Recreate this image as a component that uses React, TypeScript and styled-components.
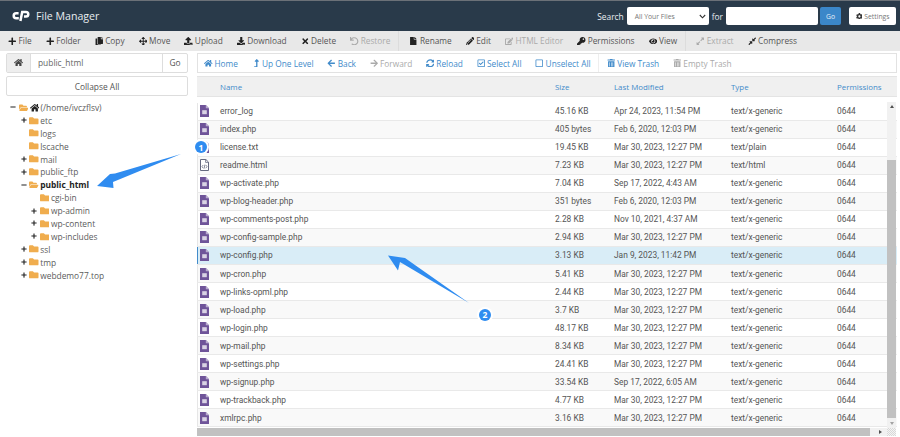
import React from 'react'
import styled, { createGlobalStyle } from 'styled-components'
import {
  FaArrowLeft,
  FaArrowRight,
  FaArrowsAlt,
  FaCog,
  FaCompressAlt,
  FaCopy,
  FaDownload,
  FaEdit,
  FaExpandAlt,
  FaEye,
  FaFile,
  FaFolder,
  FaFolderOpen,
  FaHome,
  FaKey,
  FaLevelUpAlt,
  FaMinus,
  FaPencilAlt,
  FaPlus,
  FaRegCheckSquare,
  FaRegSquare,
  FaSyncAlt,
  FaTimes,
  FaTrashAlt,
  FaUndo,
  FaUpload,
} from 'react-icons/fa'

const GlobalStyle = createGlobalStyle`
  html, body {
    margin: 0;
    padding: 0;
    background: #fff;
    overflow: hidden;
  }
  * {
    box-sizing: border-box;
  }
`

const Page = styled.div`
  position: relative;
  width: 900px;
  height: 437px;
  overflow: hidden;
  display: flex;
  flex-direction: column;
  font-family: 'Open Sans', 'Liberation Sans', sans-serif;
  color: #555;
  background: #fff;
`

const Header = styled.header`
  height: 31px;
  flex: none;
  background: #293a4a;
  border-top: 1px solid #6b7178;
  display: flex;
  align-items: center;
  padding: 0 4px 0 12px;
`

const Brand = styled.div`
  display: flex;
  align-items: center;
  gap: 6px;
  color: #e8edf0;
  font-size: 10.6px;
`

const SearchArea = styled.div`
  margin-left: auto;
  display: flex;
  align-items: center;
  color: #e8edf0;
  font-size: 8.4px;
`

const ScopeSelect = styled.div`
  width: 82px;
  height: 17.5px;
  margin: 0 3px;
  padding: 0 3px 0 8px;
  background: #fff;
  border-radius: 2px;
  color: #777;
  font-size: 6.8px;
  display: flex;
  align-items: center;
  justify-content: space-between;
`

const SearchInput = styled.div`
  width: 92px;
  height: 17.5px;
  margin: 0 2px 0 3px;
  background: #fff;
  border-radius: 2px;
`

const SearchGo = styled.div`
  width: 21px;
  height: 17.5px;
  background: #3b87c9;
  color: #e6f0f8;
  font-size: 6.8px;
  border-radius: 2px;
  display: flex;
  align-items: center;
  justify-content: center;
`

const SettingsButton = styled.div`
  width: 47px;
  height: 17.5px;
  margin-left: 8px;
  background: #fff;
  color: #777;
  font-size: 6.8px;
  border-radius: 2px;
  display: flex;
  align-items: center;
  justify-content: center;
  gap: 2px;

  svg {
    color: #333;
  }
`

const Toolbar = styled.nav`
  height: 19.5px;
  flex: none;
  background: #e8e8e8;
  display: flex;
  align-items: center;
  gap: 14px;
  padding: 0 0 0 8px;
`

const ToolButton = styled.div<{ $disabled?: boolean }>`
  display: flex;
  align-items: center;
  gap: 2px;
  font-size: 8.3px;
  white-space: nowrap;
  color: ${({ $disabled }) => ($disabled ? '#aaa' : '#555')};

  svg {
    font-size: 8.5px;
    color: ${({ $disabled }) => ($disabled ? '#aaa' : '#222')};
  }
`

const ToolSeparator = styled.div`
  width: 1px;
  height: 19.5px;
  background: #dcdcdc;
  margin: 0 -4px 0 -6px;
`

const Body = styled.div`
  flex: 1;
  min-height: 0;
  display: flex;
`

const Sidebar = styled.aside`
  width: 197px;
  flex: none;
  padding: 2.5px 9px 0 6px;
`

const PathBar = styled.div`
  height: 19.5px;
  display: flex;
  align-items: stretch;
  border: 1px solid #ddd;
  border-radius: 2px;
  font-size: 8.4px;
`

const PathHome = styled.div`
  width: 24px;
  background: #eee;
  border-right: 1px solid #ddd;
  display: flex;
  align-items: center;
  justify-content: center;
  color: #444;
  font-size: 9px;
`

const PathValue = styled.div`
  flex: 1;
  padding-left: 7px;
  display: flex;
  align-items: center;
  color: #666;
`

const PathGo = styled.div`
  width: 25px;
  border-left: 1px solid #ddd;
  display: flex;
  align-items: center;
  justify-content: center;
`

const CollapseButton = styled.div`
  height: 20px;
  margin-top: 3.5px;
  border: 1px solid #ddd;
  border-radius: 2px;
  display: flex;
  align-items: center;
  justify-content: center;
  font-size: 8.4px;
`

const Tree = styled.ul`
  list-style: none;
  margin: 5px 0 0;
  padding: 0;
`

const TreeRow = styled.li<{ $depth: number }>`
  height: 12.9px;
  padding-left: ${({ $depth }) => 4 + $depth * 10.7}px;
  display: flex;
  align-items: center;
  font-size: 8.4px;
  color: #5c5c5c;
`

const Toggle = styled.span`
  width: 8.5px;
  flex: none;
  display: flex;
  font-size: 6px;
  color: #222;
`

const TreeGlyph = styled.span<{ $dark?: boolean }>`
  display: flex;
  margin-right: 1.5px;
  font-size: 9.5px;
  color: ${({ $dark }) => ($dark ? '#222' : '#f0ad4e')};
`

const TreeLabel = styled.span<{ $active?: boolean }>`
  font-weight: ${({ $active }) => ($active ? 700 : 400)};
  color: ${({ $active }) => ($active ? '#222' : '#5c5c5c')};
`

const Main = styled.main`
  flex: 1;
  min-width: 0;
  padding: 2.5px 3px 0 0;
  display: flex;
  flex-direction: column;
`

const Actions = styled.div`
  height: 20px;
  flex: none;
  border: 1px solid #e2e2e2;
  display: flex;
  align-items: center;
  gap: 13.6px;
  padding-left: 6px;
`

const ActionLink = styled.div<{ $disabled?: boolean }>`
  display: flex;
  align-items: center;
  gap: 2px;
  font-size: 8.3px;
  white-space: nowrap;
  color: ${({ $disabled }) => ($disabled ? '#aaa' : '#428bca')};

  svg {
    font-size: 8.5px;
  }
`

const ActionSeparator = styled.div`
  width: 1px;
  height: 18px;
  background: #eee;
  margin: 0 -6px;
`

const Table = styled.div`
  position: relative;
  flex: 1;
  min-height: 0;
  margin-top: 3px;
  overflow: hidden;
`

const columns = '23px 335px 59px 117px 106px 1fr'

const HeadRow = styled.div`
  height: 21px;
  display: grid;
  grid-template-columns: ${columns};
  align-items: center;
  background: #f0f0f0;
  border: 1px solid #e4e4e4;
  border-width: 1px 0;
  font-size: 7.9px;
  color: #428bca;
`

const HeadFirst = styled.span`
  grid-column: 2;
`

const RowList = styled.div`
  padding-top: 5.6px;
`

const Row = styled.div<{ $selected: boolean; $odd: boolean }>`
  height: 18.06px;
  display: grid;
  grid-template-columns: ${columns};
  align-items: center;
  font-family: 'Roboto', 'Liberation Sans', sans-serif;
  font-size: 8.4px;
  color: #555;
  background: ${({ $selected, $odd }) => ($selected ? '#d9edf7' : $odd ? '#f9f9f9' : '#fff')};
  border-bottom: 1px solid #e9e9e9;
  box-shadow: inset 1px 0 0 ${({ $selected }) => ($selected ? '#428bca' : '#e6e6e6')};
`

const IconCell = styled.span`
  display: flex;
  padding-left: 3px;
`

const ScrollTrack = styled.div`
  position: absolute;
  top: 26px;
  right: 1px;
  bottom: 9px;
  width: 9px;
  background: #f1f1f1;
`

const ScrollThumb = styled.div`
  position: absolute;
  top: 58px;
  left: 0;
  right: 0;
  bottom: 10px;
  background: #c1c1c1;
`

const ArrowUp = styled.span`
  position: absolute;
  top: 3px;
  left: 2.5px;
  border: 2px solid transparent;
  border-top: 0;
  border-bottom: 3px solid #505050;
`

const ArrowDown = styled.span`
  position: absolute;
  bottom: 3px;
  left: 2.5px;
  border: 2px solid transparent;
  border-bottom: 0;
  border-top: 3px solid #a3a3a3;
`

const HScroll = styled.div`
  position: absolute;
  left: 0;
  right: 1px;
  bottom: 1px;
  height: 8px;
  background: #f1f1f1;
`

const HThumb = styled.div`
  width: 673px;
  height: 100%;
  background: #c1c1c1;
`

const ArrowRightGlyph = styled.span`
  position: absolute;
  top: 2px;
  right: 14px;
  border: 2px solid transparent;
  border-right: 0;
  border-left: 3px solid #505050;
`

const ScrollCorner = styled.span`
  position: absolute;
  top: 0;
  right: 0;
  width: 9px;
  height: 8px;
  background: repeating-conic-gradient(#d8d8d8 0 25%, #f4f4f4 0 50%) 0 0 / 2px 2px;
`

const Overlay = styled.svg`
  position: absolute;
  inset: 0;
  pointer-events: none;
`

const Badge = styled.div<{ $x: number; $y: number }>`
  position: absolute;
  left: ${({ $x }) => $x}px;
  top: ${({ $y }) => $y}px;
  width: 12px;
  height: 12px;
  border-radius: 50%;
  background: #2f8cf0;
  box-shadow: 0 0 0 2px #fff;
  color: #fff;
  font-size: 8.5px;
  font-weight: 700;
  display: flex;
  align-items: center;
  justify-content: center;
`

function CpanelLogo() {
  return (
    <svg width="18" height="12" viewBox="0 0 18 12" fill="none" stroke="#fff" strokeWidth="2.5">
      <path d="M6.6 3.2H4.2a2.5 2.5 0 0 0 0 5h2.6" />
      <path d="M8.4 11 10.2 2h3.8a2.2 2.2 0 0 1 0 4.6h-2" />
    </svg>
  )
}

function ScriptIcon({ markup }: { markup: boolean }) {
  if (markup) {
    return (
      <svg width="9" height="12" viewBox="0 0 9 12">
        <path d="M.5.5h5.4l2.6 2.6v8.4H.5z" fill="#fff" stroke="#666a80" strokeWidth="1" />
        <path d="M5.6.6v2.8h2.8" fill="none" stroke="#666a80" strokeWidth=".8" />
        <path d="M3.2 6 2 7.6l1.2 1.6M5.8 6 7 7.6 5.8 9.2M4.9 5.6 4.1 9.6" fill="none" stroke="#555a70" strokeWidth=".7" />
      </svg>
    )
  }
  return (
    <svg width="9" height="12" viewBox="0 0 9 12">
      <path d="M0 0h5.8L9 3.2V12H0z" fill="#6f5499" />
      <path d="M5.8 0v3.2H9z" fill="#b9abd0" />
      <rect x="2.2" y="5.2" width="4.6" height="4" fill="#d9d3e4" />
    </svg>
  )
}

const tools = [
  { icon: <FaPlus />, label: 'File' },
  { icon: <FaPlus />, label: 'Folder' },
  { icon: <FaCopy />, label: 'Copy' },
  { icon: <FaArrowsAlt />, label: 'Move' },
  { icon: <FaUpload />, label: 'Upload' },
  { icon: <FaDownload />, label: 'Download' },
  { icon: <FaTimes />, label: 'Delete' },
  { icon: <FaUndo />, label: 'Restore', disabled: true },
  { separator: true },
  { icon: <FaFile />, label: 'Rename' },
  { icon: <FaPencilAlt />, label: 'Edit' },
  { icon: <FaEdit />, label: 'HTML Editor', disabled: true },
  { icon: <FaKey />, label: 'Permissions' },
  { icon: <FaEye />, label: 'View' },
  { separator: true },
  { icon: <FaExpandAlt />, label: 'Extract', disabled: true },
  { icon: <FaCompressAlt />, label: 'Compress' },
]

const actions = [
  { icon: <FaHome />, label: 'Home' },
  { icon: <FaLevelUpAlt />, label: 'Up One Level' },
  { icon: <FaArrowLeft />, label: 'Back' },
  { icon: <FaArrowRight />, label: 'Forward', disabled: true },
  { icon: <FaSyncAlt />, label: 'Reload' },
  { icon: <FaRegCheckSquare />, label: 'Select All' },
  { icon: <FaRegSquare />, label: 'Unselect All' },
  { separator: true },
  { icon: <FaTrashAlt />, label: 'View Trash' },
  { icon: <FaTrashAlt />, label: 'Empty Trash', disabled: true },
]

const tree = [
  { label: '(/home/ivczflsv)', depth: 0, toggle: 'minus', home: true, open: true },
  { label: 'etc', depth: 1, toggle: 'plus' },
  { label: 'logs', depth: 1 },
  { label: 'lscache', depth: 1 },
  { label: 'mail', depth: 1, toggle: 'plus' },
  { label: 'public_ftp', depth: 1, toggle: 'plus' },
  { label: 'public_html', depth: 1, toggle: 'minus', open: true, active: true },
  { label: 'cgi-bin', depth: 2 },
  { label: 'wp-admin', depth: 2, toggle: 'plus' },
  { label: 'wp-content', depth: 2, toggle: 'plus' },
  { label: 'wp-includes', depth: 2, toggle: 'plus' },
  { label: 'ssl', depth: 1, toggle: 'plus' },
  { label: 'tmp', depth: 1, toggle: 'plus' },
  { label: 'webdemo77.top', depth: 1, toggle: 'plus' },
]

const MAR30 = 'Mar 30, 2023, 12:27 PM'
const GENERIC = 'text/x-generic'

const files = [
  ['error_log', '45.16 KB', 'Apr 24, 2023, 11:54 PM', GENERIC],
  ['index.php', '405 bytes', 'Feb 6, 2020, 12:03 PM', GENERIC],
  ['license.txt', '19.45 KB', MAR30, 'text/plain'],
  ['readme.html', '7.23 KB', MAR30, 'text/html'],
  ['wp-activate.php', '7.04 KB', 'Sep 17, 2022, 4:43 AM', GENERIC],
  ['wp-blog-header.php', '351 bytes', 'Feb 6, 2020, 12:03 PM', GENERIC],
  ['wp-comments-post.php', '2.28 KB', 'Nov 10, 2021, 4:37 AM', GENERIC],
  ['wp-config-sample.php', '2.94 KB', MAR30, GENERIC],
  ['wp-config.php', '3.13 KB', 'Jan 9, 2023, 11:42 PM', GENERIC],
  ['wp-cron.php', '5.41 KB', MAR30, GENERIC],
  ['wp-links-opml.php', '2.44 KB', MAR30, GENERIC],
  ['wp-load.php', '3.7 KB', MAR30, GENERIC],
  ['wp-login.php', '48.17 KB', MAR30, GENERIC],
  ['wp-mail.php', '8.34 KB', MAR30, GENERIC],
  ['wp-settings.php', '24.41 KB', MAR30, GENERIC],
  ['wp-signup.php', '33.54 KB', 'Sep 17, 2022, 6:05 AM', GENERIC],
  ['wp-trackback.php', '4.77 KB', MAR30, GENERIC],
  ['xmlrpc.php', '3.16 KB', MAR30, GENERIC],
]

export default function App() {
  return (
    <Page>
      <GlobalStyle />
      <Header>
        <Brand>
          <CpanelLogo />
          File Manager
        </Brand>
        <SearchArea>
          Search
          <ScopeSelect>
            All Your Files
            <svg width="7" height="5" viewBox="0 0 7 5" fill="none" stroke="#333" strokeWidth="1.1">
              <path d="M.8 1 3.5 3.8 6.2 1" />
            </svg>
          </ScopeSelect>
          for
          <SearchInput />
          <SearchGo>Go</SearchGo>
          <SettingsButton>
            <FaCog />
            Settings
          </SettingsButton>
        </SearchArea>
      </Header>

      <Toolbar>
        {tools.map((tool, i) =>
          tool.separator ? (
            <ToolSeparator key={i} />
          ) : (
            <ToolButton key={i} $disabled={tool.disabled}>
              {tool.icon}
              {tool.label}
            </ToolButton>
          ),
        )}
      </Toolbar>

      <Body>
        <Sidebar>
          <PathBar>
            <PathHome>
              <FaHome />
            </PathHome>
            <PathValue>public_html</PathValue>
            <PathGo>Go</PathGo>
          </PathBar>
          <CollapseButton>Collapse All</CollapseButton>
          <Tree>
            {tree.map((node) => (
              <TreeRow key={node.label} $depth={node.depth}>
                <Toggle>
                  {node.toggle === 'minus' && <FaMinus />}
                  {node.toggle === 'plus' && <FaPlus />}
                </Toggle>
                <TreeGlyph>{node.open ? <FaFolderOpen /> : <FaFolder />}</TreeGlyph>
                {node.home && (
                  <TreeGlyph $dark>
                    <FaHome />
                  </TreeGlyph>
                )}
                <TreeLabel $active={node.active}>{node.label}</TreeLabel>
              </TreeRow>
            ))}
          </Tree>
        </Sidebar>

        <Main>
          <Actions>
            {actions.map((action, i) =>
              action.separator ? (
                <ActionSeparator key={i} />
              ) : (
                <ActionLink key={i} $disabled={action.disabled}>
                  {action.icon}
                  {action.label}
                </ActionLink>
              ),
            )}
          </Actions>
          <Table>
            <HeadRow>
              <HeadFirst>Name</HeadFirst>
              <span>Size</span>
              <span>Last Modified</span>
              <span>Type</span>
              <span>Permissions</span>
            </HeadRow>
            <RowList>
              {files.map(([name, size, modified, type], i) => (
                <Row key={name} $selected={name === 'wp-config.php'} $odd={i % 2 === 1}>
                  <IconCell>
                    <ScriptIcon markup={type === 'text/html'} />
                  </IconCell>
                  <span>{name}</span>
                  <span>{size}</span>
                  <span>{modified}</span>
                  <span>{type}</span>
                  <span>0644</span>
                </Row>
              ))}
            </RowList>
            <ScrollTrack>
              <ArrowUp />
              <ScrollThumb />
              <ArrowDown />
            </ScrollTrack>
            <HScroll>
              <HThumb />
              <ArrowRightGlyph />
              <ScrollCorner />
            </HScroll>
          </Table>
        </Main>
      </Body>

      <Overlay width="900" height="437" viewBox="0 0 900 437">
        <path d="M181 154 115 173.5 110 174 97 186 113.5 188 113 182z" fill="#2f8cf0" />
        <path d="M469 303 405 258 388 255.5 398 270.5 400 262z" fill="#2f8cf0" />
      </Overlay>
      <Badge $x={195} $y={141}>1</Badge>
      <Badge $x={479} $y={308.5}>2</Badge>
    </Page>
  )
}
